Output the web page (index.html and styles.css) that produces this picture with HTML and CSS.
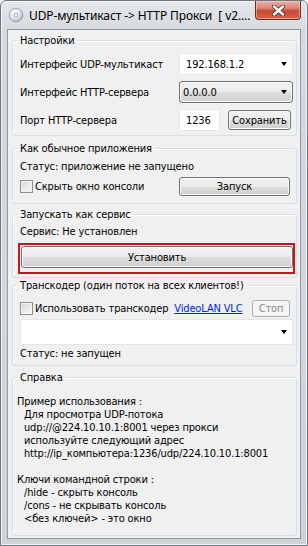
FILE: index.html
```html
<!DOCTYPE html>
<html lang="ru">
<head>
    <meta charset="UTF-8">
    <title>UDP-мультикаст -> HTTP Прокси</title>
    <link rel="stylesheet" href="styles.css">
</head>
<body>
    <div class="window">
        <div class="titlebar">
            <svg class="app-icon" width="16" height="16" viewBox="0 0 16 16">
                <defs>
                    <radialGradient id="disc" cx="0.4" cy="0.35" r="0.7">
                        <stop offset="0" stop-color="#ffffff"/>
                        <stop offset="0.6" stop-color="#dfe1e8"/>
                        <stop offset="1" stop-color="#a9adba"/>
                    </radialGradient>
                </defs>
                <circle cx="8" cy="8" r="6.8" fill="url(#disc)" stroke="#8d92a0" stroke-width="0.8"/>
                <circle cx="8" cy="8" r="2" fill="#f6f6f8" stroke="#9da1ad" stroke-width="0.8"/>
            </svg>
            <span class="title">UDP-мультикаст -&gt; HTTP Прокси&nbsp; [ v2....</span>
            <div class="close-btn">
                <svg width="13" height="11" viewBox="0 0 13 11">
                    <path d="M2 1.5 L11 9.5 M11 1.5 L2 9.5" stroke="#4a3a3a" stroke-width="4.2" stroke-linecap="round"/>
                    <path d="M2 1.5 L11 9.5 M11 1.5 L2 9.5" stroke="#ffffff" stroke-width="2.4" stroke-linecap="round"/>
                </svg>
            </div>
        </div>

        <div class="client">
            <!-- Настройки -->
            <fieldset class="group group-settings">
                <legend>Настройки</legend>
                <div class="settings-grid">
                    <span>Интерфейс UDP-мультикаст</span>
                    <div class="combo combo-flat">192.168.1.2<span class="arrow"></span></div>
                    <span>Интерфейс HTTP-сервера</span>
                    <div class="combo combo-button">0.0.0.0<span class="arrow"></span></div>
                    <span>Порт HTTP-сервера</span>
                    <div class="port-row">
                        <input type="text" class="text-input" value="1236">
                        <button class="btn btn-save">Сохранить</button>
                    </div>
                </div>
            </fieldset>

            <!-- Как обычное приложение -->
            <fieldset class="group group-app">
                <legend>Как обычное приложения</legend>
                <div class="status">Статус: приложение не запущено</div>
                <div class="action-row">
                    <label class="check-label"><span class="check"></span>Скрыть окно консоли</label>
                    <button class="btn btn-run">Запуск</button>
                </div>
            </fieldset>

            <!-- Сервис -->
            <fieldset class="group group-service">
                <legend>Запускать как сервис</legend>
                <div class="status">Сервис: Не установлен</div>
                <div class="highlight">
                    <button class="btn btn-install">Установить</button>
                </div>
            </fieldset>

            <!-- Транскодер -->
            <fieldset class="group group-transcoder">
                <legend>Транскодер (один поток на всех клиентов!)</legend>
                <div class="transcoder-row">
                    <label class="check-label"><span class="check"></span>Использовать транскодер</label>
                    <a href="#" class="link">VideoLAN VLC</a>
                    <button class="btn btn-stop" disabled>Стоп</button>
                </div>
                <div class="combo combo-flat combo-wide"><span class="arrow"></span></div>
                <div class="status status-transcoder">Статус: не запущен</div>
            </fieldset>

            <!-- Справка -->
            <fieldset class="group group-help">
                <legend>Справка</legend>
                <div class="help">
                    <div>Пример использования :</div>
                    <div class="indent">Для просмотра UDP-потока</div>
                    <div class="indent">udp://@224.10.10.1:8001 через прокси</div>
                    <div class="indent">используйте следующий адрес</div>
                    <div class="indent">http://ip_компьютера:1236/udp/224.10.10.1:8001</div>
                    <div class="blank"></div>
                    <div>Ключи командной строки :</div>
                    <div class="indent">/hide - скрыть консоль</div>
                    <div class="indent">/cons - не скрывать консоль</div>
                    <div class="indent">&lt;без ключей&gt; - это окно</div>
                </div>
            </fieldset>
        </div>
    </div>
</body>
</html>
```

FILE: styles.css
```css
body {
    margin: 0;
    font-family: "DejaVu Sans Condensed", "DejaVu Sans", sans-serif;
    font-size: 11px;
    letter-spacing: -0.15px;
    color: #000;
    background: #fff;
}
.window {
    width: 308px;
    height: 546px;
    box-sizing: border-box;
    border: 1px solid #6e7780;
    border-radius: 6px 6px 0 0;
    padding: 0 6px 6px;
    background: linear-gradient(#e4e7eb, #d6dadf 30px, #cfd3d8);
    box-shadow: inset 0 0 0 1px #f2f4f6;
    display: flex;
    flex-direction: column;
}
.titlebar {
    height: 28px;
    display: flex;
    align-items: center;
}
.app-icon {
    margin-left: 1px;
    flex: none;
}
.title {
    margin-left: 5px;
    font-family: "Noto Sans", "Open Sans", sans-serif;
    font-size: 12px;
    letter-spacing: -0.1px;
    white-space: nowrap;
    overflow: hidden;
}
.close-btn {
    margin-left: auto;
    align-self: flex-start;
    flex: none;
    width: 46px;
    height: 19px;
    box-sizing: border-box;
    border: 1px solid #6a2e26;
    border-top: none;
    border-radius: 0 0 4px 4px;
    background: linear-gradient(#eab0a3, #dc8572 40%, #c9482f 55%, #d2634a);
    box-shadow: inset 0 0 0 1px rgba(255, 220, 210, 0.5);
    display: flex;
    align-items: center;
    justify-content: center;
}
.client {
    flex: 1;
    border: 1px solid #8f99a4;
    background: #f0f0f0;
    padding: 4px 3px 2px 4px;
    display: flex;
    flex-direction: column;
}
.group {
    margin: 0;
    min-width: 0;
    border: 1px solid #d5dfe5;
    border-radius: 3px;
    padding: 0 3px 0 7px;
    box-shadow: inset 1px 1px 0 #fff;
}
.group legend {
    padding: 0 2px;
    margin-left: -2px;
    line-height: 13px;
}
.group-settings {
    padding-top: 6px;
    padding-bottom: 4px;
}
.group-app {
    margin-top: 6px;
    padding-top: 5px;
    padding-bottom: 7px;
}
.group-service {
    margin-top: 4px;
    padding-top: 4px;
    padding-bottom: 3px;
}
.group-transcoder {
    margin-top: 1px;
    padding-top: 8px;
    padding-bottom: 5px;
}
.group-help {
    margin-top: 5px;
    padding-top: 11px;
    flex: 1;
}
.settings-grid {
    display: grid;
    grid-template-columns: 1fr 114px;
    grid-auto-rows: 22px;
    row-gap: 6px;
    align-items: center;
}
.combo {
    height: 22px;
    box-sizing: border-box;
    display: flex;
    align-items: center;
    padding-left: 6px;
}
.combo-flat {
    background: #fff;
    border: 1px solid #e2e5ea;
}
.combo-button {
    padding-left: 3px;
    border: 1px solid #707070;
    border-radius: 3px;
    background: linear-gradient(#f2f2f2, #ebebeb 50%, #dddddd 50%, #cfcfcf);
    box-shadow: inset 0 0 0 1px #fbfbfb;
}
.combo-wide {
    height: 26px;
    margin-top: 2px;
}
.arrow {
    margin-left: auto;
    margin-right: 5px;
    width: 0;
    height: 0;
    border-left: 3.5px solid transparent;
    border-right: 3.5px solid transparent;
    border-top: 4px solid #000;
}
.port-row {
    display: flex;
    align-items: center;
    justify-content: space-between;
    padding-right: 2px;
}
.text-input {
    width: 41px;
    height: 22px;
    box-sizing: border-box;
    border: 1px solid #e2e5ea;
    padding: 0 0 0 6px;
    font: inherit;
    letter-spacing: inherit;
    background: #fff;
}
.btn {
    font: inherit;
    letter-spacing: inherit;
    color: #000;
    padding: 0;
    box-sizing: border-box;
    border: 1px solid #707070;
    border-radius: 3px;
    background: linear-gradient(#f2f2f2, #ebebeb 50%, #dddddd 50%, #cfcfcf);
    box-shadow: inset 0 0 0 1px #fbfbfb;
}
.btn-save {
    width: 63px;
    height: 20px;
}
.status {
    line-height: 13px;
}
.action-row {
    display: flex;
    align-items: center;
    margin-top: 4px;
    height: 19px;
}
.check-label {
    display: flex;
    align-items: center;
}
.check {
    width: 13px;
    height: 13px;
    box-sizing: border-box;
    border: 1px solid #8e8f8f;
    background: linear-gradient(135deg, #d6d6d6, #f8f8f8);
    box-shadow: inset 0 0 0 1px #f4f4f4;
    margin-right: 2px;
}
.btn-run {
    width: 111px;
    height: 19px;
    margin-left: auto;
    margin-right: 3px;
}
.highlight {
    margin: 5px -2px 0;
    border: 2px solid #c4161c;
    padding: 1px 0 4px 1px;
}
.btn-install {
    display: block;
    width: 100%;
    height: 22px;
}
.transcoder-row {
    display: flex;
    align-items: center;
    height: 17px;
}
.link {
    margin-left: 6px;
    color: #0022ee;
}
.btn-stop {
    width: 38px;
    height: 17px;
    margin-left: auto;
    margin-right: 3px;
    color: #8a8a8a;
    border-color: #adb2b5;
    background: #f4f4f4;
    box-shadow: none;
}
.status-transcoder {
    margin-top: 2px;
}
.help {
    margin-left: -3px;
    line-height: 13px;
}
.help .indent {
    padding-left: 7px;
}
.help .blank {
    height: 13px;
}
```
